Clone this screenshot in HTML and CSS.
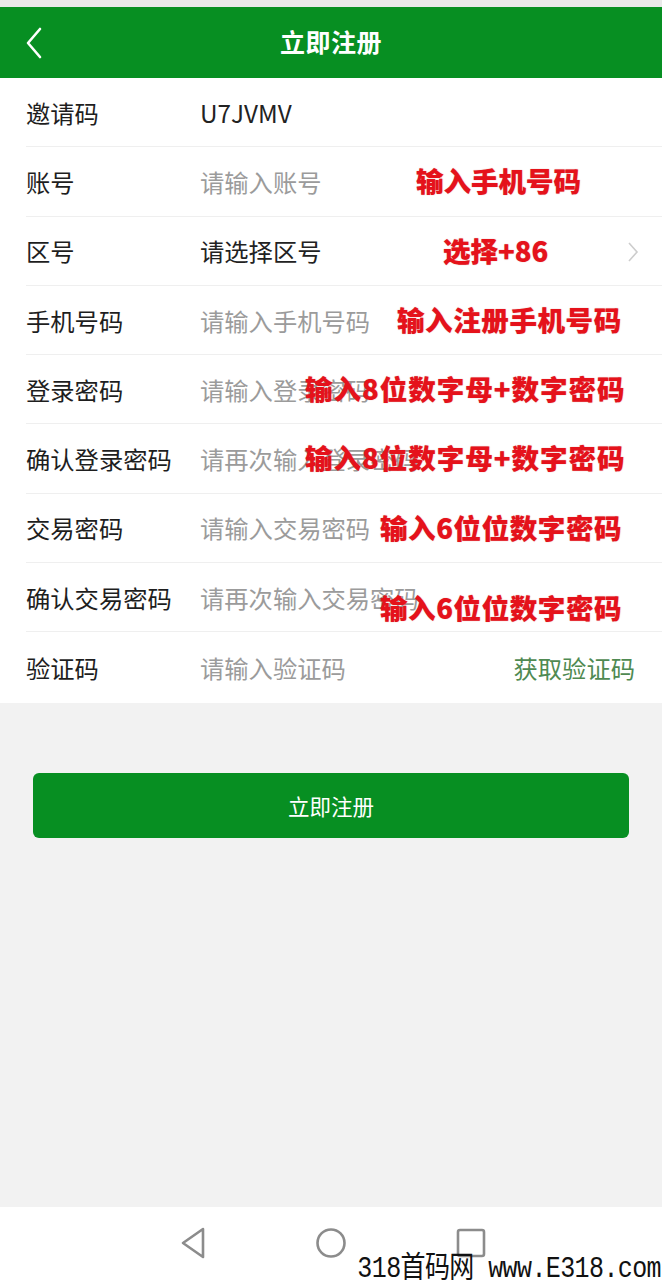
FILE: index.html
```html
<!DOCTYPE html>
<html lang="zh-CN">
<head>
<meta charset="utf-8">
<title>立即注册</title>
<link rel="stylesheet" href="styles.css">
</head>
<body>
<div class="page">
  <div class="statusbar"></div>
  <header class="header">
    <span class="back">
      <svg width="18" height="32" viewBox="0 0 18 32"><polyline points="15,2 3,16 15,30" fill="none" stroke="#fff" stroke-width="2.6" stroke-linecap="round" stroke-linejoin="round"/></svg>
    </span>
    <h1 class="title">立即注册</h1>
    <span></span>
  </header>

  <section class="form">
    <div class="row">
      <span class="label">邀请码</span>
      <span class="value">U7JVMV</span>
    </div>
    <div class="row">
      <span class="label">账号</span>
      <span class="value placeholder">请输入账号</span>
      <span class="note note-account">输入手机号码</span>
    </div>
    <div class="row">
      <span class="label">区号</span>
      <span class="value">请选择区号</span>
      <span class="note note-area">选择+86</span>
      <svg class="chev" width="12" height="22" viewBox="0 0 12 22"><polyline points="2,2 10,11 2,20" fill="none" stroke="#cdcdcd" stroke-width="1.6"/></svg>
    </div>
    <div class="row">
      <span class="label">手机号码</span>
      <span class="value placeholder">请输入手机号码</span>
      <span class="note note-phone">输入注册手机号码</span>
    </div>
    <div class="row">
      <span class="label">登录密码</span>
      <span class="value placeholder">请输入登录密码</span>
      <span class="note note-login">输入8位数字母+数字密码</span>
    </div>
    <div class="row">
      <span class="label">确认登录密码</span>
      <span class="value placeholder">请再次输入登录密码</span>
      <span class="note note-login">输入8位数字母+数字密码</span>
    </div>
    <div class="row">
      <span class="label">交易密码</span>
      <span class="value placeholder">请输入交易密码</span>
      <span class="note note-trade">输入6位位数字密码</span>
    </div>
    <div class="row">
      <span class="label">确认交易密码</span>
      <span class="value placeholder">请再次输入交易密码</span>
      <span class="note note-trade note-low">输入6位位数字密码</span>
    </div>
    <div class="row last">
      <span class="label">验证码</span>
      <span class="value placeholder">请输入验证码</span>
      <span class="getcode">获取验证码</span>
    </div>
  </section>

  <div class="actions">
    <button class="submit">立即注册</button>
  </div>

  <div class="fill"></div>

  <nav class="navbar">
    <svg width="40" height="34" viewBox="0 0 40 34"><polygon points="32,3 12,17 32,31" fill="none" stroke="#8c8c8c" stroke-width="2.6" stroke-linejoin="round"/></svg>
    <svg width="40" height="34" viewBox="0 0 40 34"><circle cx="20" cy="17" r="13.5" fill="none" stroke="#8c8c8c" stroke-width="2.6"/></svg>
    <svg width="40" height="34" viewBox="0 0 40 34"><rect x="7" y="4" width="26" height="26" rx="2" fill="none" stroke="#8c8c8c" stroke-width="2.6"/></svg>
    <span class="watermark">318首码网 www.E318.com</span>
  </nav>
</div>
</body>
</html>
```

FILE: styles.css
```css
* { box-sizing: border-box; }
html, body {
  margin: 0;
  padding: 0;
}
body {
  width: 662px;
  height: 1280px;
  overflow: hidden;
  background: #f2f2f2;
  font-family: "Noto Sans CJK SC", "Noto Sans", sans-serif;
  color: #222;
}
.page {
  display: flex;
  flex-direction: column;
  height: 1280px;
}
.statusbar {
  height: 7px;
  background: #e9e9e9;
}
.header {
  height: 71px;
  background: #078f22;
  display: grid;
  grid-template-columns: 80px 1fr 80px;
  align-items: center;
}
.back {
  display: flex;
  padding-left: 25px;
  padding-top: 1px;
}
.title {
  margin: 0;
  text-align: center;
  color: #fff;
  font-size: 25px;
  font-weight: 700;
  letter-spacing: 0.5px;
  line-height: 1;
  padding-bottom: 2px;
}
.form {
  background: #fff;
  padding-bottom: 1px;
}
.row {
  position: relative;
  height: 69.3px;
  margin-left: 26px;
  display: flex;
  align-items: center;
  border-bottom: 1px solid #efefef;
  font-size: 24.3px;
}
.row.last { border-bottom: none; }
.label {
  width: 174px;
  flex: none;
  color: #1e1e1e;
}
.value {
  flex: 1;
  color: #222;
}
.placeholder { color: #9b9b9b; }
.chev {
  position: absolute;
  right: 23px;
  top: 24px;
}
.getcode {
  color: #4f8a52;
  padding-right: 27px;
}
.note {
  position: absolute;
  color: #e5121b;
  font-weight: 900;
  font-size: 27.5px;
  line-height: 1;
  white-space: nowrap;
  text-shadow: 0 0 1px rgba(180,0,0,0.5);
  top: 20px;
}
.note-account { left: 390px; }
.note-area { left: 417px; }
.note-phone { left: 371px; letter-spacing: 0.6px; }
.note-login { left: 279px; letter-spacing: 1px; }
.note-trade { left: 354px; letter-spacing: 0.6px; }
.note-low { top: 31px; }
.actions {
  padding: 70px 33px 0;
}
.submit {
  display: block;
  width: 596px;
  height: 65px;
  border: none;
  border-radius: 6px;
  background: #078f22;
  color: #fff;
  font-family: "Noto Sans CJK SC", sans-serif;
  font-size: 21.5px;
  padding: 0;
}
.fill { flex: 1; }
.navbar {
  position: relative;
  height: 73px;
  background: #fff;
  display: flex;
  justify-content: center;
  align-items: center;
  gap: 100px;
  padding-bottom: 1px;
}
.watermark {
  position: absolute;
  right: 1px;
  bottom: -4px;
  font-family: "Liberation Mono", "Noto Sans CJK SC", monospace;
  font-size: 25px;
  line-height: 1;
  color: #111;
  transform: scaleY(1.2);
  transform-origin: bottom right;
  white-space: nowrap;
  letter-spacing: -0.6px;
}
```
